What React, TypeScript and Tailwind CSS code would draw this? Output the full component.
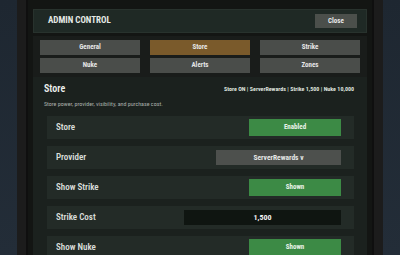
import React from "react";

type Row = {
  label: string;
  kind: "toggle" | "select" | "input";
  value: string;
};

const tabs = [
  { name: "General", active: false },
  { name: "Store", active: true },
  { name: "Strike", active: false },
  { name: "Nuke", active: false },
  { name: "Alerts", active: false },
  { name: "Zones", active: false },
];

const rows: Row[] = [
  { label: "Store", kind: "toggle", value: "Enabled" },
  { label: "Provider", kind: "select", value: "ServerRewards v" },
  { label: "Show Strike", kind: "toggle", value: "Shown" },
  { label: "Strike Cost", kind: "input", value: "1,500" },
  { label: "Show Nuke", kind: "toggle", value: "Shown" },
];

function Control({ row }: { row: Row }) {
  if (row.kind === "toggle") {
    return (
      <div className="flex h-[17px] w-[92px] items-center justify-center bg-[#3c8a45] text-[7px] font-bold text-[#e8f2e8]">
        {row.value}
      </div>
    );
  }
  if (row.kind === "select") {
    return (
      <div className="flex h-[15px] w-[125px] items-center justify-center bg-[#4d504d] text-[7.5px] font-bold text-[#e4e6e4]">
        {row.value}
      </div>
    );
  }
  return (
    <div className="flex h-[15px] w-[157px] items-center justify-center bg-[#0f1511] text-[8px] font-bold text-[#f0f0f0]">
      {row.value}
    </div>
  );
}

export default function App() {
  return (
    <div
      className="flex h-[255px] w-[400px] overflow-hidden bg-gradient-to-b from-[#1e2731] to-[#232d38] font-stretch-condensed"
      style={{ fontFamily: "'Roboto Condensed', Roboto, 'Liberation Sans', sans-serif" }}
    >
      <div className="ml-[17px] flex h-full w-[366px] shrink-0 bg-[#1c1c1c] pl-[9px]">
        {/* Panel */}
        <div className="flex h-full w-[348px] shrink-0 flex-col overflow-hidden border-x-2 border-[#0f0f0f] bg-[#131513] px-[5px] pt-[9px]">
          {/* Header */}
          <div className="flex h-[24px] shrink-0 items-center justify-between border border-[#28322d] bg-[#1f2925] pl-[14px] pr-[9px]">
            <span className="text-[9px] font-bold text-[#e4e8e4]">ADMIN CONTROL</span>
            <div className="flex h-[14px] w-[42px] items-center justify-center bg-[#4b4f4b] text-[7px] font-bold text-[#e8e8e8]">
              Close
            </div>
          </div>

          {/* Tabs */}
          <div className="mt-[3px] grid shrink-0 grid-cols-3 gap-x-[10px] gap-y-[3px] bg-[#191c1a] px-[7px] py-[4px]">
            {tabs.map((t) => (
              <div
                key={t.name}
                className={`flex h-[15px] items-center justify-center text-[7px] font-bold text-[#e6e6e6] ${
                  t.active ? "bg-[#7a5a2b]" : "bg-[#4a4d4a]"
                }`}
              >
                {t.name}
              </div>
            ))}
          </div>

          {/* Section */}
          <div className="flex shrink-0 flex-col bg-[#1b211e] pb-[20px] pl-[11px] pr-[13px] pt-[4px]">
            <div className="flex items-center justify-between">
              <span className="text-[10px] font-semibold text-[#eef0ee]">Store</span>
              <span className="text-[6px] font-bold text-[#dfe2df]">
                Store ON | ServerRewards | Strike 1,500 | Nuke 10,000
              </span>
            </div>
            <div className="mt-[3px] text-[6px] text-[#a9afab]">
              Store power, provider, visibility, and purchase cost.
            </div>
            <div className="mt-[8px] flex flex-col gap-[7px] pl-[3px]">
              {rows.map((r) => (
                <div
                  key={r.label}
                  className="flex h-[23px] shrink-0 items-center justify-between bg-[#232b27] pl-[9px] pr-[13px]"
                >
                  <span className="text-[9px] font-semibold text-[#d9ddd9]">{r.label}</span>
                  <Control row={r} />
                </div>
              ))}
            </div>
          </div>
        </div>
      </div>
    </div>
  );
}
